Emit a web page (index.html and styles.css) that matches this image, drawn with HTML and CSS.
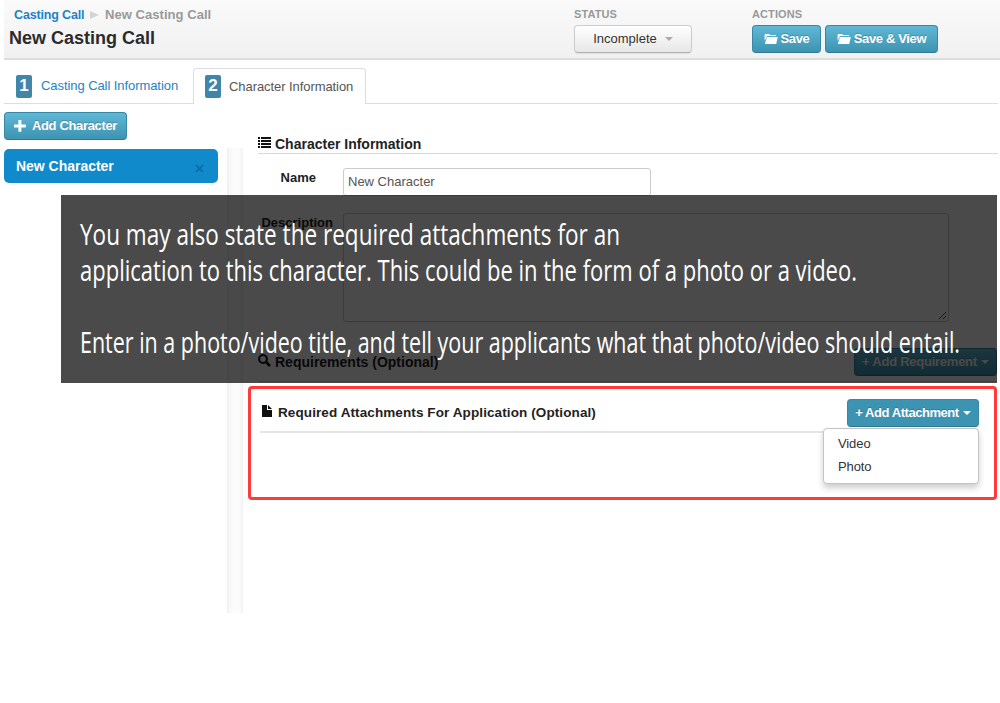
FILE: index.html
```
<!DOCTYPE html>
<html lang="en">
<head>
<meta charset="utf-8">
<title>New Casting Call</title>
<link rel="stylesheet" href="styles.css">
</head>
<body>
<svg width="0" height="0" class="defs">
  <defs>
    <g id="folder"><path d="M.6 8V2Q.6 1 1.6 1H5l1 1h5.5q.8 0 .8 1H3z"/><path d="M3 4h10.8l-1.6 7H.8z"/></g>
  </defs>
</svg>
<header class="header">
  <div class="title-block">
    <div class="crumbs"><a class="crumb-link">Casting Call</a><i class="crumb-arrow"></i><span>New Casting Call</span></div>
    <h1 class="title">New Casting Call</h1>
  </div>
  <div class="status">
    <div class="label">STATUS</div>
    <button class="btn btn-light">Incomplete<i class="caret"></i></button>
  </div>
  <div class="actions">
    <div class="label">ACTIONS</div>
    <div class="buttons">
      <button class="btn btn-blue save"><svg width="14" height="12"><use href="#folder"/></svg>Save</button>
      <button class="btn btn-blue save-view"><svg width="14" height="12"><use href="#folder"/></svg>Save &amp; View</button>
    </div>
  </div>
</header>
<nav class="tabs">
  <a class="tab"><b class="badge">1</b>Casting Call Information</a>
  <a class="tab active"><b class="badge">2</b>Character Information</a>
</nav>
<main class="body">
  <aside class="sidebar">
    <button class="btn btn-blue add-character"><svg width="12" height="12"><path d="M4.4 0h3v4.4h4.4v3H7.4v4.4h-3V7.4H0v-3h4.4z"/></svg>Add Character</button>
    <div class="character"><span>New Character</span><svg width="9" height="9"><path d="M1 1l7 7M8 1L1 8"/></svg></div>
  </aside>
  <div class="divider"></div>
  <section class="content">
    <h2 class="heading info-heading"><svg class="icon" width="13" height="12"><path d="M0 0h2v2H0zM3 0h10v2H3zM0 3h2v2H0zM3 3h10v2H3zM0 6h2v2H0zM3 6h10v2H3zM0 9h2v2H0zM3 9h10v2H3z"/></svg><span class="info-text">Character Information</span></h2>
    <div class="field"><label>Name</label><div class="input">New Character</div></div>
    <div class="field description"><label>Description</label><div class="textarea"><svg width="9" height="9"><path d="M1 8l7-7M5 8l3-3"/></svg></div></div>
    <div class="heading req-heading"><svg class="icon" width="13" height="13"><circle cx="5" cy="5" r="3.9"/><path class="handle" d="M8 8l4 4"/></svg><span class="req-text">Requirements (Optional)</span><button class="btn btn-blue add-req">+ Add Requirement<i class="caret"></i></button></div>
    <div class="highlight">
      <div class="heading att-heading"><svg class="icon" width="10" height="12"><path d="M0 0h5v5h5v7H0z"/><path d="M6 0l4 4H6z"/></svg><span class="att-text">Required Attachments For Application (Optional)</span>
        <div class="dropdown"><button class="btn btn-blue add-att">+ Add Attachment<i class="caret"></i></button>
          <div class="menu"><a>Video</a><a>Photo</a></div></div>
      </div>
    </div>
  </section>
</main>
<div class="callout">
  <svg width="936" height="188">
    <text x="19" y="50" textLength="540" lengthAdjust="spacingAndGlyphs">You may also state the required attachments for an</text>
    <text x="19" y="86" textLength="777" lengthAdjust="spacingAndGlyphs">application to this character. This could be in the form of a photo or a video.</text>
    <text x="19" y="158" textLength="880" lengthAdjust="spacingAndGlyphs">Enter in a photo/video title, and tell your applicants what that photo/video should entail.</text>
  </svg>
</div>
</body>
</html>
```
FILE: styles.css
```
* { box-sizing: border-box; }
body { margin: 0; width: 1000px; height: 703px; overflow: hidden; position: relative; background: #fff; color: #333; font: 13px/18px "Liberation Sans", Arial, sans-serif; }
.defs { position: absolute; }
.header { margin-left: 4px; height: 60px; display: flex; background: linear-gradient(#fafafa, #f1f1f1); border-bottom: 2px solid #dcdcdc; }
.title-block { width: 570px; padding: 6px 0 0 5px; }
.crumbs { display: flex; align-items: center; height: 17px; padding-left: 5px; font-weight: bold; font-size: 13px; color: #999; letter-spacing: .05px; }
.crumb-link { color: #1d83c6; width: 71px; white-space: nowrap; font-size: 12.5px; letter-spacing: -.15px; }
.crumb-arrow { margin: 0 6px 0 5px; border-left: 9px solid #d4d4d4; border-top: 4px solid transparent; border-bottom: 4px solid transparent; }
.title { margin: 4px 0 0; font-size: 18px; line-height: 23px; color: #2b2b2b; }
.status { width: 178px; padding-top: 6px; }
.actions { padding-top: 6px; }
.label { height: 19px; line-height: 17px; font-size: 11px; font-weight: bold; color: #999; letter-spacing: .1px; }
.buttons { display: flex; gap: 4px; }
.btn { display: flex; align-items: center; justify-content: center; height: 28px; padding: 0; border-radius: 4px; font: 13px/18px "Liberation Sans", Arial, sans-serif; white-space: nowrap; }
.btn-light { width: 118px; color: #333; border: 1px solid #ccc; border-bottom-color: #b3b3b3; background: linear-gradient(#fff, #e7e7e7); box-shadow: 0 1px 1px rgba(0,0,0,.08); }
.caret { width: 8px; height: 4px; margin-left: 8px; border: 4px solid transparent; border-top-color: #aaa; border-bottom: 0; }
.btn-blue { color: #fff; font-weight: bold; letter-spacing: -.35px; fill: #fff; border: 1px solid #3688a5; border-bottom-color: #2f7893; background: linear-gradient(#5fb8d5, #3d94b2); text-shadow: 0 -1px 0 rgba(0,0,0,.2); }
.btn-blue .caret { border-top-color: #fff; margin-left: 4px; }
.save { width: 69px; gap: 3px; }
.save-view { width: 113px; gap: 3px; }
.tabs { margin: 8px 2px 0 4px; height: 36px; display: flex; border-bottom: 1px solid #ddd; }
.tab { width: 189px; height: 36px; display: flex; align-items: center; padding-left: 12px; gap: 9px; color: #1d83c6; white-space: nowrap; letter-spacing: -.07px; }
.tab.active { width: 173px; border: 1px solid #ddd; border-bottom: 0; border-radius: 4px 4px 0 0; background: #fff; color: #555; padding-left: 11px; gap: 8px; }
.badge { width: 16px; height: 23px; border-radius: 2px; background: #4185a8; color: #fff; text-align: center; font: bold 17px/22px "Liberation Sans", Arial, sans-serif; }
.body { display: flex; margin-left: 4px; height: 509px; }
.sidebar { width: 214px; padding-top: 8px; }
.add-character { width: 123px; gap: 6px; letter-spacing: -.35px; }
.character { margin-top: 9px; height: 34px; border-radius: 5px; background: #118acb; color: #fff; font-weight: bold; font-size: 14px; display: flex; align-items: center; justify-content: space-between; padding: 0 14px 0 12px; letter-spacing: -.02px; }
.character svg { margin-top: 5px; stroke: #09679c; stroke-width: 1.4; }
.divider { width: 16px; margin: 44px 0 0 9px; background: linear-gradient(90deg, #eee, #f7f7f7 15%, #fcfcfc 40%, #fcfcfc 75%, #f2f2f2); }
.content { width: 755px; padding-top: 29px; margin-left: 5px; }
.sidebar, .divider, .content { flex-shrink: 0; }
.heading { display: flex; align-items: center; margin: 0; font-size: 14px; font-weight: bold; color: #222; white-space: nowrap; }
.info-heading { height: 21px; margin-left: 10px; width: 740px; border-bottom: 1px solid #d8d8d8; gap: 4px; }
.icon { fill: #111; }
.info-heading .icon { margin-top: -1px; }
.info-text { margin-top: 1px; }
.field { display: flex; margin-top: 14px; }
.field label { width: 95px; padding: 1px 27px 0 0; text-align: right; font-weight: bold; color: #222; }
.input { width: 308px; height: 28px; border: 1px solid #ccc; border-radius: 3px; padding: 4px; color: #555; }
.description { margin-top: 17px; }
.description label { padding-right: 10px; }
.textarea { width: 606px; height: 109px; border: 1px solid #ccc; border-radius: 3px; display: flex; align-items: flex-end; justify-content: flex-end; padding: 1px; }
.textarea svg { stroke: #555; }
.req-heading { margin: 26px 0 0 10px; height: 34px; width: 739px; border-bottom: 1px solid #ddd; align-items: flex-start; }
.req-heading .icon { margin-top: 6px; stroke: #111; stroke-width: 2; fill: none; }
.handle { stroke-width: 2.5; }
.req-text { margin: 5px 0 0 4px; }
.add-req { width: 143px; margin-left: auto; letter-spacing: -.25px; }
.highlight { width: 749px; height: 114px; margin-top: 4px; padding: 10px 15px 0 9px; border: 3px solid #fe3a3a; border-radius: 4px; }
.att-heading { height: 34px; border-bottom: 2px solid #e4e4e4; align-items: flex-start; padding-left: 2px; }
.att-heading .icon { margin-top: 6px; }
.att-text { margin: 5px 0 0 6px; font-size: 13.5px; letter-spacing: .1px; }
.dropdown { position: relative; margin-left: auto; }
.add-att { width: 132px; background: #3d94b2; letter-spacing: -.45px; }
.menu { position: absolute; right: 0; top: 29px; width: 156px; height: 56px; padding: 3px 14px; background: #fff; border: 1px solid #c4c4c4; border-radius: 4px; box-shadow: 0 4px 6px rgba(0,0,0,.2); font-weight: normal; font-size: 13px; color: #333; letter-spacing: -.1px; }
.menu a { display: block; line-height: 23px; }
.callout { position: absolute; left: 61px; top: 195px; width: 936px; height: 188px; background: rgba(0,0,0,.71); }
.callout svg { display: block; overflow: visible; }
.callout text { font: 29px "Open Sans", "Noto Sans", sans-serif; fill: #fff; }
```
